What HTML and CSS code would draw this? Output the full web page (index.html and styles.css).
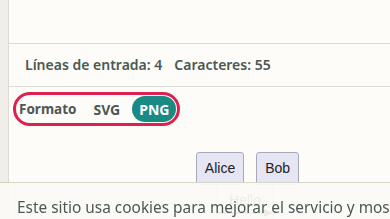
FILE: index.html
```html
<!DOCTYPE html>
<html lang="es">
<head>
    <meta charset="UTF-8">
    <meta name="viewport" content="width=device-width, initial-scale=1.0">
    <title>Editor de diagramas</title>
    <link rel="stylesheet" href="styles.css">
</head>
<body>
    <div class="layout">
        <!-- Side strip -->
        <div class="side"></div>

        <!-- Main panel -->
        <div class="main">
            <div class="editor-tail"></div>

            <div class="stats">
                <span>Líneas de entrada: 4</span>
                <span>Caracteres: 55</span>
            </div>

            <div class="toolbar">
                <div class="format-group">
                    <span class="format-label">Formato</span>
                    <button class="format-btn">SVG</button>
                    <button class="format-btn active">PNG</button>
                </div>
            </div>

            <!-- Preview -->
            <div class="preview">
                <div class="actors">
                    <div class="actor">Alice</div>
                    <div class="actor">Bob</div>
                </div>
                <svg class="lines" width="110" height="40" viewBox="0 0 110 40">
                    <line x1="24" y1="0" x2="24" y2="40" stroke="#b8b8c4" stroke-width="1"/>
                    <line x1="80" y1="0" x2="80" y2="40" stroke="#b8b8c4" stroke-width="1"/>
                    <text x="52" y="20" font-family="Liberation Sans, Arial, sans-serif" font-size="14" text-anchor="middle" fill="#333">Hello</text>
                    <line x1="24" y1="28" x2="76" y2="28" stroke="#333" stroke-width="1.5"/>
                    <path d="M71 24 L79 28 L71 32 Z" fill="#333"/>
                </svg>
            </div>
        </div>
    </div>

    <!-- Cookie notice -->
    <div class="cookie-banner">
        Este sitio usa cookies para mejorar el servicio y mostrar anuncios.
    </div>
</body>
</html>
```

FILE: styles.css
```css
body {
    margin: 0;
    padding: 0;
    font-family: "Noto Sans", Arial, sans-serif;
    background-color: #fdfcf8;
    color: #4b5855;
    overflow: hidden;
}

.layout {
    display: flex;
    height: 219px;
    overflow: hidden;
}

.side {
    width: 8px;
    flex-shrink: 0;
    background-color: #efeee8;
    border-right: 1px solid #dcdbd3;
}

.main {
    flex: 1;
    background-color: #fdfcf8;
}

.editor-tail {
    height: 43px;
    border-bottom: 1px solid #dedcd6;
}

/* Stats row */
.stats {
    display: flex;
    gap: 12px;
    align-items: center;
    height: 40px;
    padding-bottom: 2px;
    padding-left: 16px;
    font-size: 14px;
    font-weight: 600;
    border-bottom: 1px solid #dedcd6;
}

/* Format selector */
.toolbar {
    padding: 5px 0 0 4px;
}

.format-group {
    display: inline-flex;
    align-items: center;
    height: 28px;
    padding: 0 1px 0 3px;
    border: 3px solid #e01e4f;
    border-radius: 20px;
}

.format-label {
    font-size: 13.5px;
    font-weight: 700;
    margin-right: 5px;
}

.format-btn {
    font-family: inherit;
    font-size: 14px;
    font-weight: 700;
    color: #4b5855;
    background: none;
    border: none;
    height: 26px;
    padding: 0 12px;
    border-radius: 13px;
    cursor: pointer;
}

.format-btn.active {
    background-color: #1a8a84;
    color: white;
    padding: 0 7px;
}

/* Diagram preview */
.preview {
    display: flex;
    flex-direction: column;
    align-items: center;
    padding: 26px 0 0 96px;
}

.actors {
    display: flex;
    gap: 12px;
}

.actor {
    font-family: "Liberation Sans", Arial, sans-serif;
    font-size: 14px;
    color: #222;
    background-color: #e5e5f3;
    border: 1px solid #a9a9b9;
    border-radius: 3px;
    padding: 7px 8px 8px;
}

/* Cookie notice */
.cookie-banner {
    position: fixed;
    left: 0;
    right: 0;
    top: 182px;
    height: 37px;
    box-sizing: border-box;
    padding: 15px 0 0 17px;
    background-color: rgba(251, 250, 245, 0.93);
    border-top: 1px solid #d9d5c6;
    font-size: 15.4px;
    line-height: 20px;
    color: #4b5855;
    white-space: nowrap;
    overflow: hidden;
}
```
